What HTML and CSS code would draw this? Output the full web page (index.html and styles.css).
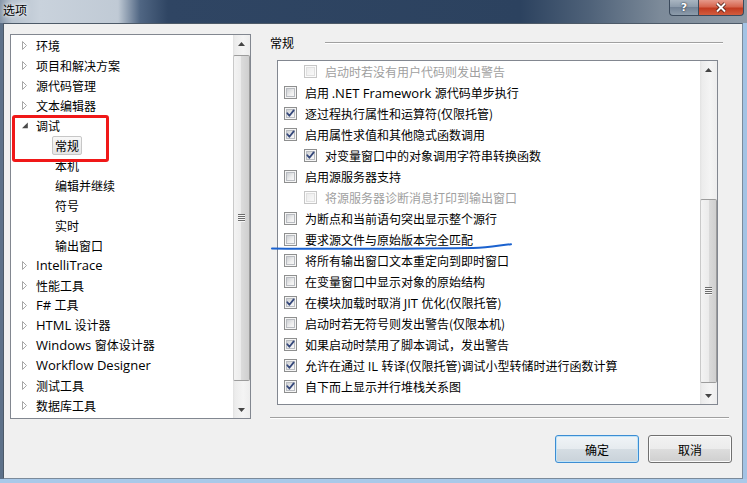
FILE: index.html
```html
<!DOCTYPE html>
<html lang="zh-CN">
<head>
<meta charset="utf-8">
<title>选项</title>
<link rel="stylesheet" href="styles.css">
</head>
<body>
<div class="window">
  <div class="titlebar">
    <div class="title">选项</div>
    <div class="caption">
      <div class="cap-btn help"><span class="q">?</span></div>
      <div class="cap-btn close">
        <svg width="14" height="11" viewBox="0 0 14 11"><path class="x-out" d="M3 1.5 L11 9.5 M11 1.5 L3 9.5"/><path class="x-in" d="M3 1.5 L11 9.5 M11 1.5 L3 9.5"/></svg>
      </div>
    </div>
  </div>
  <div class="frame">
    <div class="client">
      <div class="main">
        <div class="tree">
          <div class="tree-list">
            <div class="trow"><svg class="tw" width="6" height="9" viewBox="0 0 6 9"><polygon points="0.5,0.5 4.5,4.5 0.5,8.5"/></svg><span class="lbl">环境</span></div>
            <div class="trow"><svg class="tw" width="6" height="9" viewBox="0 0 6 9"><polygon points="0.5,0.5 4.5,4.5 0.5,8.5"/></svg><span class="lbl">项目和解决方案</span></div>
            <div class="trow"><svg class="tw" width="6" height="9" viewBox="0 0 6 9"><polygon points="0.5,0.5 4.5,4.5 0.5,8.5"/></svg><span class="lbl">源代码管理</span></div>
            <div class="trow"><svg class="tw" width="6" height="9" viewBox="0 0 6 9"><polygon points="0.5,0.5 4.5,4.5 0.5,8.5"/></svg><span class="lbl">文本编辑器</span></div>
            <div class="trow"><svg class="tw open" width="6" height="9" viewBox="0 0 6 9"><polygon points="5.8,1.5 5.8,7.3 0,7.3"/></svg><span class="lbl">调试</span></div>
            <div class="trow child"><span class="lbl selected">常规</span></div>
            <div class="trow child"><span class="lbl">本机</span></div>
            <div class="trow child"><span class="lbl">编辑并继续</span></div>
            <div class="trow child"><span class="lbl">符号</span></div>
            <div class="trow child"><span class="lbl">实时</span></div>
            <div class="trow child"><span class="lbl">输出窗口</span></div>
            <div class="trow"><svg class="tw" width="6" height="9" viewBox="0 0 6 9"><polygon points="0.5,0.5 4.5,4.5 0.5,8.5"/></svg><span class="lbl"><span class="lat">IntelliTrace</span></span></div>
            <div class="trow"><svg class="tw" width="6" height="9" viewBox="0 0 6 9"><polygon points="0.5,0.5 4.5,4.5 0.5,8.5"/></svg><span class="lbl">性能工具</span></div>
            <div class="trow"><svg class="tw" width="6" height="9" viewBox="0 0 6 9"><polygon points="0.5,0.5 4.5,4.5 0.5,8.5"/></svg><span class="lbl"><span class="lat">F# </span>工具</span></div>
            <div class="trow"><svg class="tw" width="6" height="9" viewBox="0 0 6 9"><polygon points="0.5,0.5 4.5,4.5 0.5,8.5"/></svg><span class="lbl"><span class="lat">HTML </span>设计器</span></div>
            <div class="trow"><svg class="tw" width="6" height="9" viewBox="0 0 6 9"><polygon points="0.5,0.5 4.5,4.5 0.5,8.5"/></svg><span class="lbl"><span class="lat">Windows </span>窗体设计器</span></div>
            <div class="trow"><svg class="tw" width="6" height="9" viewBox="0 0 6 9"><polygon points="0.5,0.5 4.5,4.5 0.5,8.5"/></svg><span class="lbl"><span class="lat">Workflow Designer</span></span></div>
            <div class="trow"><svg class="tw" width="6" height="9" viewBox="0 0 6 9"><polygon points="0.5,0.5 4.5,4.5 0.5,8.5"/></svg><span class="lbl">测试工具</span></div>
            <div class="trow"><svg class="tw" width="6" height="9" viewBox="0 0 6 9"><polygon points="0.5,0.5 4.5,4.5 0.5,8.5"/></svg><span class="lbl">数据库工具</span></div>
          </div>
          <div class="vscroll">
            <div class="sbtn"><svg width="7" height="4" viewBox="0 0 7 4"><polygon points="3.5,0 7,4 0,4"/></svg></div>
            <div class="track"><div class="thumb tree-thumb"><span class="grip"></span></div></div>
            <div class="sbtn"><svg width="7" height="4" viewBox="0 0 7 4"><polygon points="0,0 7,0 3.5,4"/></svg></div>
          </div>
          <div class="redbox"></div>
        </div>

        <div class="page">
          <div class="group-head"><span class="gh-text">常规</span><span class="rule"></span></div>
          <div class="box">
            <div class="list">
              <div class="crow sub dis"><span class="cb"></span><span>启动时若没有用户代码则发出警告</span></div>
              <div class="crow"><span class="cb"></span><span>启用 <span class="lat">.NET Framework </span>源代码单步执行</span></div>
              <div class="crow"><span class="cb on"><svg width="13" height="13" viewBox="0 0 13 13"><path d="M3.3 6.2 L5.4 8.8 L9.7 3.4"/></svg></span><span>逐过程执行属性和运算符(仅限托管)</span></div>
              <div class="crow"><span class="cb on"><svg width="13" height="13" viewBox="0 0 13 13"><path d="M3.3 6.2 L5.4 8.8 L9.7 3.4"/></svg></span><span>启用属性求值和其他隐式函数调用</span></div>
              <div class="crow sub"><span class="cb on"><svg width="13" height="13" viewBox="0 0 13 13"><path d="M3.3 6.2 L5.4 8.8 L9.7 3.4"/></svg></span><span>对变量窗口中的对象调用字符串转换函数</span></div>
              <div class="crow"><span class="cb"></span><span>启用源服务器支持</span></div>
              <div class="crow sub dis"><span class="cb"></span><span>将源服务器诊断消息打印到输出窗口</span></div>
              <div class="crow"><span class="cb"></span><span>为断点和当前语句突出显示整个源行</span></div>
              <div class="crow"><span class="cb"></span><span>要求源文件与原始版本完全匹配</span></div>
              <div class="crow"><span class="cb"></span><span>将所有输出窗口文本重定向到即时窗口</span></div>
              <div class="crow"><span class="cb"></span><span>在变量窗口中显示对象的原始结构</span></div>
              <div class="crow"><span class="cb on"><svg width="13" height="13" viewBox="0 0 13 13"><path d="M3.3 6.2 L5.4 8.8 L9.7 3.4"/></svg></span><span>在模块加载时取消 <span class="lat">JIT </span>优化(仅限托管)</span></div>
              <div class="crow"><span class="cb"></span><span>启动时若无符号则发出警告(仅限本机)</span></div>
              <div class="crow"><span class="cb on"><svg width="13" height="13" viewBox="0 0 13 13"><path d="M3.3 6.2 L5.4 8.8 L9.7 3.4"/></svg></span><span>如果启动时禁用了脚本调试，发出警告</span></div>
              <div class="crow"><span class="cb on"><svg width="13" height="13" viewBox="0 0 13 13"><path d="M3.3 6.2 L5.4 8.8 L9.7 3.4"/></svg></span><span>允许在通过 <span class="lat">IL </span>转译(仅限托管)调试小型转储时进行函数计算</span></div>
              <div class="crow"><span class="cb on"><svg width="13" height="13" viewBox="0 0 13 13"><path d="M3.3 6.2 L5.4 8.8 L9.7 3.4"/></svg></span><span>自下而上显示并行堆栈关系图</span></div>
            </div>
            <div class="vscroll">
              <div class="sbtn"><svg width="7" height="4" viewBox="0 0 7 4"><polygon points="3.5,0 7,4 0,4"/></svg></div>
              <div class="track"><div class="thumb list-thumb"><span class="grip"></span></div></div>
              <div class="sbtn"><svg width="7" height="4" viewBox="0 0 7 4"><polygon points="0,0 7,0 3.5,4"/></svg></div>
            </div>
          </div>
          <div class="separator"></div>
          <svg class="pen" width="250" height="20" viewBox="0 0 250 20"><path d="M4 14.5 C 60 15.2, 150 14.6, 205 14 C 222 13.6, 232 11.2, 243 10.2"/></svg>
        </div>
      </div>
      <div class="actions">
        <button class="btn default">确定</button>
        <button class="btn">取消</button>
      </div>
    </div>
  </div>
  <div class="bframe"></div>
</div>
</body>
</html>
```

FILE: styles.css
```css
* { box-sizing: border-box; }
html, body { margin: 0; padding: 0; }
body {
  width: 747px;
  height: 483px;
  overflow: hidden;
  font-family: "Noto Sans CJK SC", "Open Sans", sans-serif;
  font-size: 12px;
  color: #000;
  background: #6a7d94;
}
.lat { font-family: "Open Sans", "Noto Sans CJK SC", sans-serif; font-size: 13px; }

.window { width: 747px; height: 483px; display: flex; flex-direction: column; }

/* title bar */
.titlebar {
  height: 23px;
  display: flex;
  align-items: flex-start;
  background: linear-gradient(to right, #8797aa 0, #b7c2ce 12px, #c9d2dc 40px, #c0cad5 118px, #506683 140px, #2f4563 168px, #2c425f 520px, #4f6279 590px, #7c8a99 660px, #8e9aa6 747px);
}
.title {
  padding: 1px 0 0 3px;
  line-height: 18px;
  font-size: 12px;
  color: #000;
  text-shadow: 0 0 6px #fff, 0 0 3px #fff;
}
.caption { margin-left: auto; margin-right: 3px; display: flex; }
.cap-btn {
  height: 16px;
  border: 1px solid #3b4a5c;
  border-top: none;
  display: flex;
  align-items: center;
  justify-content: center;
}
.help {
  width: 29px;
  border-right: none;
  border-radius: 0 0 0 4px;
  background: linear-gradient(#a9b5c1, #8a99a9 50%, #738396 50%, #8d9cab);
}
.q {
  color: #fff;
  font-family: "DejaVu Sans", sans-serif;
  font-weight: bold;
  font-size: 11px;
  line-height: 14px;
  text-shadow: 0 0 2px #2a3542, 0 0 1px #2a3542;
}
.close {
  width: 46px;
  border-radius: 0 0 4px 0;
  background: linear-gradient(#e6998a, #d6664f 45%, #c23b21 55%, #d35d3e);
}
.x-out { stroke: #4a1b12; stroke-width: 3.6; fill: none; }
.x-in { stroke: #fff; stroke-width: 2; fill: none; }

/* frame */
.frame {
  flex: 1;
  display: flex;
  padding: 0 4px 0 3px;
  background: linear-gradient(to right, #5d7189 0, #5d7189 3px, #a3c3e4 3px);
}
.bframe { height: 4px; background: #a9c9e9; }

.client {
  flex: 1;
  display: flex;
  flex-direction: column;
  background: #f0f0f0;
  border: 1px solid #7b8a9a;
  border-top-color: #4d5a68;
  border-left-color: #4d5a68;
}
.main { display: flex; padding: 10px 0 0 6px; }

/* tree */
.tree {
  position: relative;
  width: 241px;
  height: 385px;
  border: 1px solid #828790;
  background: #fff;
  display: flex;
}
.tree-list { flex: 1; }
.trow {
  height: 20px;
  display: flex;
  align-items: center;
  padding-left: 11px;
  white-space: nowrap;
}
.trow.child { padding-left: 41px; }
.tw { flex: none; margin-right: 5px; }
.tw polygon { fill: #fff; stroke: #a6a6a6; stroke-width: 1; }
.tw.open polygon { fill: #4a4a4a; stroke: none; }
.lbl {
  padding: 0 2px;
  border: 1px solid transparent;
  line-height: 17px;
}
.lbl.selected {
  border-color: #c7c7c7;
  border-radius: 2px;
  background: linear-gradient(#f8f8f8, #e5e5e5);
}
.redbox {
  position: absolute;
  left: 1px;
  top: 80px;
  width: 97px;
  height: 47px;
  border: 3px solid #f01818;
  border-radius: 3px;
}

/* scrollbar */
.vscroll {
  width: 17px;
  flex: none;
  display: flex;
  flex-direction: column;
  background: linear-gradient(to right, #e2e2e2, #ececec 2px, #f4f4f4 60%, #ededed);
}
.sbtn {
  height: 17px;
  flex: none;
  display: flex;
  align-items: center;
  justify-content: center;
}
.sbtn polygon { fill: #454545; }
.track { flex: 1; }
.thumb {
  display: flex;
  align-items: center;
  justify-content: center;
  border: 1px solid #9c9c9c;
  border-left-color: #c9c9c9;
  border-radius: 2px;
  background: linear-gradient(to right, #f3f3f3, #ebebeb 50%, #dbdbdb 50%, #cfcfcf);
}
.tree-thumb { margin-top: 3px; height: 326px; }
.list-thumb { margin-top: 121px; height: 184px; }
.grip {
  width: 7px;
  height: 8px;
  background: repeating-linear-gradient(to bottom, #6b6b6b 0, #6b6b6b 1px, #f6f6f6 1px, #f6f6f6 2px);
}

/* right page */
.page {
  position: relative;
  width: 459px;
  margin-left: 19px;
  display: flex;
  flex-direction: column;
}
.group-head { height: 18px; display: flex; align-items: center; }
.gh-text { line-height: 18px; }
.rule {
  flex: 1;
  margin: 0 6px 0 31px;
  height: 2px;
  border-top: 1px solid #a0a0a0;
  border-bottom: 1px solid #fff;
}
.box {
  margin: 8px 0 0 7px;
  width: 441px;
  height: 345px;
  border: 1px solid #828790;
  background: #fff;
  display: flex;
}
.list { flex: 1; padding-left: 6px; overflow: hidden; }
.crow {
  height: 21px;
  display: flex;
  align-items: center;
  white-space: nowrap;
}
.crow.sub { padding-left: 20px; }
.crow.dis { color: #a0a0a0; }
.cb {
  position: relative;
  flex: none;
  width: 13px;
  height: 13px;
  margin-right: 8px;
  border: 1px solid #8e8f8f;
  background: #f5f5f5;
}
.cb::before {
  content: "";
  position: absolute;
  left: 1px;
  top: 1px;
  right: 1px;
  bottom: 1px;
  border: 1px solid #b9bcc1;
  background: linear-gradient(135deg, #cdd0d4, #eeeeee 60%, #f8f8f8);
}
.dis .cb { border-color: #c6c6c6; background: #fbfbfb; }
.dis .cb::before { border-color: #e0e0e0; background: linear-gradient(135deg, #ececec, #f8f8f8); }
.cb svg { position: absolute; left: -1px; top: -1px; }
.cb svg path { fill: none; stroke: #34477a; stroke-width: 1.8; stroke-linecap: round; stroke-linejoin: round; }

.separator {
  margin-top: 12px;
  height: 2px;
  border-top: 1px solid #a0a0a0;
  border-bottom: 1px solid #fff;
}
.pen { position: absolute; left: -2px; top: 200px; }
.pen path { fill: none; stroke: #1b62cf; stroke-width: 2; stroke-linecap: round; }

/* buttons */
.actions {
  display: flex;
  justify-content: flex-end;
  gap: 9px;
  margin-top: 16px;
  padding-right: 10px;
}
.btn {
  width: 84px;
  height: 28px;
  padding: 0;
  font-family: "Noto Sans CJK SC", sans-serif;
  font-size: 12px;
  color: #000;
  border: 1px solid #707070;
  border-radius: 3px;
  background: linear-gradient(#f2f2f2, #ebebeb 50%, #dddddd 50%, #cfcfcf);
  box-shadow: inset 0 0 0 1px #fbfbfb;
}
.btn.default {
  border-color: #3c8dd3;
  box-shadow: inset 0 0 0 1px #bfe3f8;
  background: linear-gradient(#f0f4f7, #e6ebef 50%, #d5dde3 50%, #c9d2d9);
}
```
